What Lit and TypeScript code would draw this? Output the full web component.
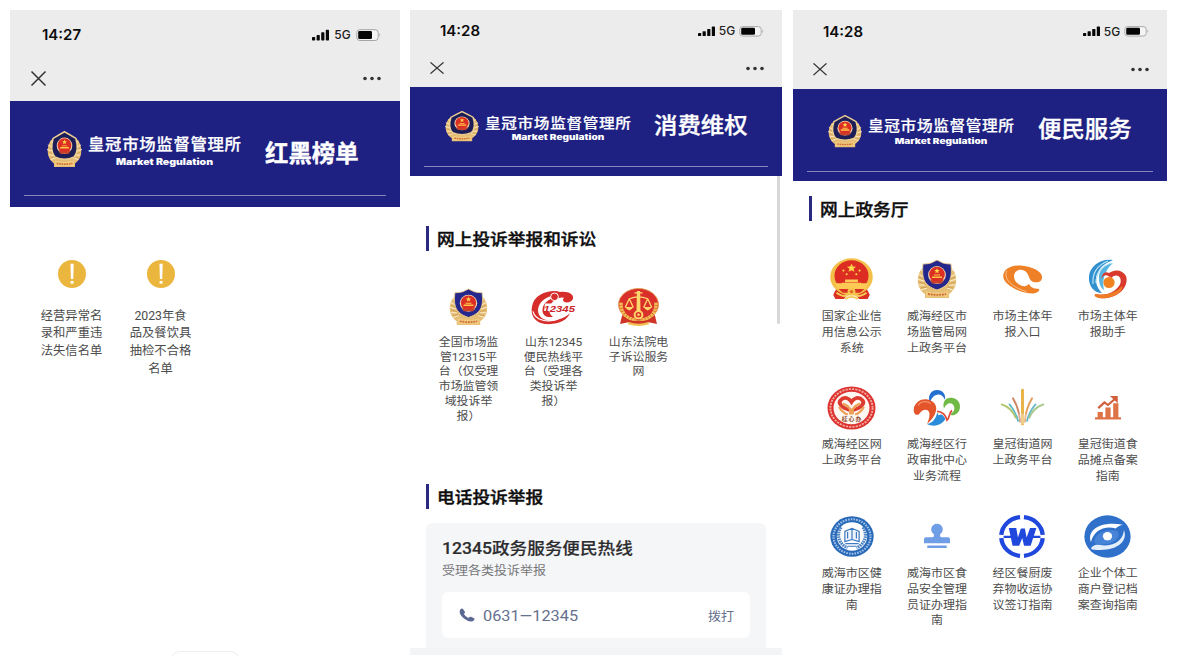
import { LitElement, html, svg, css } from "lit";
import { customElement, property } from "lit/decorators.js";
import { classMap } from "lit/directives/class-map.js";

const wreath = svg`
  <path d="M8 7C3 10 0 17 1 24C2 30 5 33 8 35L8 39H32L32 35C35 33 38 30 39 24C40 17 37 10 32 7L29 27H11Z" fill="#e6bd74"/>
  <g stroke="#fff4d8" stroke-width="1" fill="none" opacity=".9">
    <path d="M1 15L7 18M0 20L7 22M2 26L8 26M4 31L10 29M39 15L33 18M40 20L33 22M38 26L32 26M36 31L30 29M4 11L8 14M36 11L32 14"/>
  </g>
  <g stroke="#c08c45" stroke-width=".6" fill="none">
    <path d="M2 18L8 21M2 23L8 25M4 29L10 28M38 18L32 21M38 23L32 25M36 29L30 28"/>
  </g>
  <path d="M9 32Q20 35 31 32V38.5Q20 36.5 9 38.5Z" fill="#efca80"/>
  <path d="M11 35Q20 36.8 29 35" stroke="#cf6e32" stroke-width="1.8" stroke-dasharray="2 .8" fill="none"/>`;

const emblemDisc = svg`
  <circle cx="20" cy="16" r="8.9" fill="#f3d9b0"/>
  <circle cx="20" cy="15.6" r="7.8" fill="#dc2f24"/>
  <path d="M20 9.2l.8 1.8 1.9.1-1.5 1.3.5 1.9-1.7-1.1-1.7 1.1.5-1.9-1.5-1.3 1.9-.1z" fill="#ffd84f"/>
  <path d="M15 17.4H25V19H15ZM17 15.6H23V16.6H17Z" fill="#ffc547"/>
  <path d="M13 20.3Q20 24.4 27 20.3L25 24.6H15Z" fill="#c9402a"/>`;

const icons: Record<string, unknown> = {
  warn: svg`<circle cx="20" cy="20" r="20" fill="#ebb63e"/><path d="M17.8 5.5H22.4L21.8 27H18.4Z" fill="#fff"/><path d="M18 30H22.2V33.8H18Z" fill="#fff"/>`,
  badge: svg`
    ${wreath}
    <path d="M20 1L26 4Q30 5 34 5C35 17 35 26 20 31C5 26 5 17 6 5Q10 5 14 4Z" fill="#24288c" stroke="#efcf8e" stroke-width=".9"/>
    ${emblemDisc}`,
  crest: svg`
    ${wreath}
    <path d="M20 .8Q27 4.5 33 8Q37 21 31 28Q20 33 9 28Q3 21 7 8Q13 4.5 20 .8Z" fill="#1d1e58" stroke="#eccf94" stroke-width="1.7"/>
    ${emblemDisc}`,
  hotline: svg`
    <path d="M33 12C36 14 41 12 42 9C43 4 37 1 29 2C21 -1 3 3 1 17C-1 27 5 34 14 35C28 36 36 31 39 24C29 33 14 34 9 27C4 20 9 9 21 6L24 7C17 10 12 14 11.5 20C11 26 16 29 22 27.5C16 24 18 14 24 10Q29 7 33 8Q31 10 33 12Z" fill="#d62d2b"/>
    <path d="M2 22C4 31 16 34 27 30" fill="none" stroke="#fff" stroke-width="1.2"/>
    <circle cx="23.5" cy="7" r="3.9" fill="#d62d2b" stroke="#fff" stroke-width="1"/>
    <path d="M14 14H45L44 22.5H13Z" fill="#fff"/>
    <text x="12.5" y="22.2" font-size="9.6" font-style="italic" font-weight="700" textLength="31.5" lengthAdjust="spacingAndGlyphs" fill="#c9262b">12345</text>`,
  court: svg`
    <path d="M4 28L2 37L10 35L15 38H25L30 35L38 37L36 28Z" fill="#cf3426"/>
    <ellipse cx="20" cy="17" rx="19.5" ry="16.5" fill="#d9302a" stroke="#e29a4c" stroke-width=".8"/>
    <path d="M3 15C2 26 10 33 18 32M37 15C38 26 30 33 22 32" fill="none" stroke="#f1bd52" stroke-width="3.4" stroke-dasharray="2.6 .5"/>
    <path d="M16 5H24M11 11Q20 7 29 11M11 11L7 20M11 11L15 20M29 11L25 20M29 11L33 20" stroke="#ffd76c" stroke-width="1.3" fill="none"/>
    <path d="M18.4 3H21.6L22 28H18ZM7 19.6H15Q13 23 11 23T7 19.6ZM25 19.6H33Q31 23 29 23T25 19.6Z" fill="#ffd76c"/>
    <circle cx="20" cy="27.5" r="3.8" fill="#d9302a" stroke="#ffd76c" stroke-width="2"/>
    <circle cx="20" cy="27.5" r="1.3" fill="#ffd76c"/>
    <path d="M10 36Q20 39.5 30 36" fill="none" stroke="#f2c154" stroke-width="2.4"/>`,
  national: svg`
    <path d="M6 29L3 35L5 39H13L16 35H24L27 39H35L37 35L34 29Z" fill="#dc3022"/>
    <ellipse cx="20" cy="18" rx="19.8" ry="17.8" fill="#f3c04a"/>
    <ellipse cx="20" cy="17" rx="15.8" ry="14.8" fill="#dd2c22"/>
    <path d="M20 5.5l1.2 2.7 3 .2-2.3 1.9.8 2.9-2.7-1.6-2.7 1.6.8-2.9-2.3-1.9 3-.2z" fill="#ffd84d"/>
    <g fill="#ffd84d"><circle cx="12.5" cy="12" r="1"/><circle cx="27.5" cy="12" r="1"/><circle cx="15.5" cy="15.5" r="1"/><circle cx="24.5" cy="15.5" r="1"/></g>
    <path d="M14 20.5H26V23H14ZM11 23.5H29V26H11ZM5 24H35L33 29.5H7Z" fill="#fbcb55"/>
    <path d="M8 29.5H32L28 33H24Q20 29.5 16 33H12Z" fill="#dc3022"/>
    <circle cx="20" cy="32" r="3.6" fill="#f5c54d"/><circle cx="20" cy="32" r="1.6" fill="#e36a2a"/>
    <path d="M6 33Q13 38 17 35M34 33Q27 38 23 35M14 39Q20 35 26 39" fill="none" stroke="#f6ca58" stroke-width="1.8"/>`,
  swirl: svg`
    <path d="M40 13C41 6 27 .5 16 .5C4 .5 -2 8 1 15C5 23 20 29.500 31 29.500C36 29 39 25 36 24.500C31 25 28 23 26.500 19.500C25 22.500 21 22.500 18 21C13 18.500 10.500 14 11.500 10C13 5 18 4 22 6C27 8.500 26 15 30 17C34 19 40 18 40 13Z" fill="#ee8027"/>
    <path d="M4 6C0 14 9 23 24 27.500" fill="none" stroke="#fbc48d" stroke-width="1"/>`,
  phoenix: svg`
    <path d="M25 1C13 -1 2 7 1 17C0 28 7 34 14 34C8 28 6 20 10 13C13 7 18 4 25 1Z" fill="#3190cd"/>
    <path d="M20 2C10 6 4 13 5 25M23 4C13 8 8 14 8 24" fill="none" stroke="#b9e4f5" stroke-width="1.2"/>
    <path d="M25 4C16 6 10 12 11 20C11 25 13 29 16 31C14 22 16 12 25 4Z" fill="#58b5df"/>
    <path d="M21 14C27 9.5 35 11 38 17C41 26 33 37 19 39C13 40 6 38 7 35C20 38 30 31 32.5 24C34 17 28 14 23.5 19L21 17.5C18 15 15 16 13 20Q15 11 21 14Z" fill="#d93a2d"/>
    <path d="M7 35C20 37 29 33 34 27C36 32 26 39 17 39C11 40 5 38 7 35Z" fill="#ee7c24"/>
    <circle cx="21" cy="23.5" r="5.6" fill="#f08320"/>`,
  heart: svg`
    <circle cx="20" cy="20" r="19.6" fill="#dc3230"/>
    <circle cx="20" cy="20" r="17.2" fill="none" stroke="#f3a99c" stroke-width="1.6" stroke-dasharray="1.8 .9"/>
    <circle cx="20" cy="20" r="14.7" fill="#fff8f2"/>
    <path d="M19 22C12 20 9 16 11 13C14 9 18 11 20 14.5C22 11 26 9 29 13C31 16 28 20 21 22" fill="none" stroke="#dd3a30" stroke-width="3.2"/>
    <path d="M19 26V21Q16 17 13 16M21 26V21Q24 17 27 16M10 19Q12 24 17 26M30 19Q28 24 23 26" fill="none" stroke="#eda055" stroke-width="2"/>
    <text x="20" y="31.8" text-anchor="middle" font-size="4.8" font-weight="700" textLength="16" fill="#8c4a2e">桂心办</text>`,
  flower: svg`
    <path d="M17 16C14 8 18 2 24 2C30 2 33 7 32 12C30 8 27 6 24 7C20 8 18 11 17 16Z" fill="#2470d0"/>
    <path d="M14 37C16 32 18 26 15 23C12 21 8 23 6 27C2 29 0 25 1 20C3 13 11 9 18 13C26 17 25 27 14 37Z" fill="#e4552b"/>
    <path d="M5 18C8 13 14 13 18 16" fill="none" stroke="#f2906a" stroke-width="1.2"/>
    <path d="M31 21C29 14 33 9 39 10C47 11 49 20 45 25C42 28 38 29 36 27C41 26 43 21 40 17C37 14 33 16 31 21Z" fill="#70b944"/>
    <path d="M14 37C20 36 23 31 24 26C27 25 31 26 33 30C31 37 22 41 14 37Z" fill="#2b8cda"/>
    <path d="M25 27C29 25 32 27 34 33C38 30 36 26 38 23" fill="none" stroke="#fff" stroke-width="2"/>
    <path d="M24 24C29 24 33 28 34 33C37 30 36 25 39 23" fill="none" stroke="#df4636" stroke-width="1.7"/>`,
  fireworks: svg`
    <g fill="none" stroke-linecap="round" stroke-width="1.7">
      <path d="M20 3V36" stroke="#e9b347" stroke-width="2.6"/>
      <path d="M11.5 11Q17 21 18 34" stroke="#d08763"/><path d="M28.5 11Q23 21 22 34" stroke="#e19c5c"/>
      <path d="M8.5 17Q14 24 16 33" stroke="#5eb6c2"/><path d="M31.5 17Q26 24 24 33" stroke="#66b7c6"/>
      <path d="M1.5 17Q10 20 14 30" stroke="#b1c66c"/><path d="M38.5 17Q30 20 26 30" stroke="#a8c78a"/>
    </g>
    <path d="M18 36L16 26H24L22 36Z" fill="#fff" opacity=".35"/>`,
  chart: svg`
    <path d="M0 35.5H40V39H0ZM4 27H12V35.5H4ZM16 20H24V35.5H16ZM28 13H36V35.5H28Z" fill="#dd7347"/>
    <path d="M5 21L14.5 12L20 16L31 6" fill="none" stroke="#d2603a" stroke-width="3.4"/><path d="M23 1.5H35V13Z" fill="#d2603a"/>`,
  seal: svg`
    <circle cx="20" cy="20" r="19.7" fill="#2869b8"/>
    <circle cx="20" cy="20" r="16.8" fill="none" stroke="#9fc0ea" stroke-width="2" stroke-dasharray="1.5 1"/>
    <circle cx="20" cy="20" r="13.8" fill="#fff"/>
    <path d="M10 11C5 19 9 28 16 31M30 11C35 19 31 28 24 31" fill="none" stroke="#4c83c3" stroke-width="3" stroke-dasharray="1.6 .7"/>
    <path d="M13.5 15L20 12L26.5 15V25L20 23L13.5 25ZM20 12V23M16 15.5V22M24 15.5V22M14 27H26M16 29.5H24" fill="#eef4fc" stroke="#3f79bf" stroke-width="1.1"/>`,
  stamp: svg`
    <path d="M15 17C8 12 11 1 20 1C29 1 32 12 25 17Q24 22 27 22H37Q40 22 40 25V31H0V25Q0 22 3 22H13Q16 22 15 17ZM5 34.5H35V38.5H5Z" fill="#6f9de6"/>`,
  waste: svg`
    <path d="M18.3 2A18 18 0 0 0 2 18.5M2 21.5A18 18 0 0 0 18.3 38M21.7 2A18 18 0 0 1 38 18.5M38 21.5A18 18 0 0 1 21.7 38" fill="none" stroke="#2148dc" stroke-width="3.8"/>
    <path d="M4 19.2H11V21.4H4ZM29 19.2H36V21.4H29Z" fill="#2148dc"/>
    <path d="M8.5 12H15L16.5 21L19 12.5H22.5L24 21L27 12H32.5L27.5 28.5H21.8L20.2 21.5L17.6 28.5H11.8Z" fill="#2148dc"/>`,
  orbit: svg`
    <circle cx="20" cy="20" r="19.7" fill="#2f70cb"/>
    <path d="M6 25C2 14 14 5 33 9C30 10 28 11 27 12.5C17 9.5 8 15 6 25Z" fill="#fff"/>
    <path d="M34 14C38 25 27 35 7 32C4 31 9 27.5 12 27.5C24 30.5 33 25 34 14Z" fill="#e3eefb"/>
    <path d="M9 26C8 18 17 12.5 27 14.5C33 17 28 27 17 27.5Q12 28.5 9 26Z" fill="#4784d8"/>
    <circle cx="20" cy="19.7" r="3.9" fill="#fff"/>`,
};

interface Item { icon: string; w: number; h: number; lines: string[]; vb?: string; }

@customElement("icon-item")
class IconItem extends LitElement {
  @property({ attribute: false }) item!: Item;
  static styles = css`
    :host { display: flex; flex-direction: column; align-items: center; }
    .box { height: var(--icon-box); display: flex; align-items: center; justify-content: center; }
    svg { display: block; overflow: visible; font-family: "Liberation Sans", "Noto Sans CJK SC", sans-serif; }
    .label { margin-top: var(--label-gap); font-size: var(--label-size); line-height: var(--label-line);
      color: #4c4c4c; text-align: center; white-space: nowrap; transform: scaleY(var(--squash)); transform-origin: top; }
  `;
  render() {
    const { icon, w, h, lines, vb } = this.item;
    return html`<div class="box"><svg width=${w} height=${h} viewBox=${vb ?? "0 0 40 40"} preserveAspectRatio="none">${icons[icon]}</svg></div>
      <div class="label">${lines.map((l) => html`<div>${l}</div>`)}</div>`;
  }
}

@customElement("phone-header")
class PhoneHeader extends LitElement {
  @property() time = "";
  @property() heading = "";
  static styles = css`
    :host { display: block; }
    .chrome { height: var(--chrome-h); background: #ececec; }
    .status { height: var(--status-h); display: flex; align-items: center; justify-content: space-between;
      padding: 0 var(--edge-r) 0 var(--time-l); box-sizing: border-box; }
    .nav { height: var(--nav-h); display: flex; align-items: center; justify-content: space-between;
      padding: 0 var(--edge-r) 0 var(--x-l); box-sizing: border-box; }
    svg { display: block; overflow: visible; }
    .time { font: 600 15px/20px Inter, sans-serif; color: #0c0c0c; width: 42px; transform: scaleY(var(--squash)); white-space: nowrap; }
    .signals { display: flex; align-items: center; width: var(--state-w); height: 20px; }
    .bars { width: 17px; height: var(--state-h); }
    .net { flex: 1; text-align: center; font: 500 12px/20px Inter, sans-serif; color: #222; transform: scaleY(var(--squash)); white-space: nowrap; }
    .battery { width: 25px; height: var(--state-h); }
    .close { width: var(--x-w); height: var(--x-h); }
    .banner { height: var(--banner-h); background: #1e2082; box-sizing: border-box; display: flex; flex-direction: column; }
    .brand { flex: 1; display: flex; align-items: flex-start; padding-left: var(--crest-l); }
    .crest { width: var(--crest-w); height: var(--crest-h); margin-top: var(--crest-t); }
    .words { width: var(--words-w); height: var(--words-h); margin: var(--words-t) 0 0 6px; font-family: "Noto Sans CJK SC", sans-serif; }
    .heading { margin: var(--head-t) 0 0 var(--head-l); color: #fff; font: var(--head-weight) 23.4px/32px "Noto Sans CJK SC", sans-serif;
      white-space: nowrap; transform: scaleY(var(--squash)); -webkit-text-stroke: .35px #fff; }
    .rule { height: 1px; margin: 0 14px var(--rule-b); background: #8587bd; }
  `;
  render() {
    return html`
      <div class="chrome">
        <div class="status">
          <div class="time">${this.time}</div>
          <div class="signals">
            <svg class="bars" viewBox="0 0 17 12" preserveAspectRatio="none"><g fill="#080808"><rect x="0" y="8" width="3.2" height="3.5" rx=".7"/><rect x="4.6" y="6" width="3.2" height="5.5" rx=".7"/><rect x="9.2" y="3.3" width="3.2" height="8.2" rx=".7"/><rect x="13.8" y=".7" width="3.2" height="10.8" rx=".7"/></g></svg>
            <span class="net">5G</span>
            <svg class="battery" viewBox="0 0 25 12" preserveAspectRatio="none">
              <rect x=".8" y=".7" width="21.4" height="10.8" rx="3" fill="#f4f4f4" stroke="#a5a5a5"/>
              <rect x="2.2" y="2.1" width="13.8" height="8" rx="1.4" fill="#050505"/>
              <path d="M23.5 4.3Q25.3 6 23.5 7.8Z" fill="#a0a0a0"/>
            </svg>
          </div>
        </div>
        <div class="nav">
          <svg class="close" viewBox="0 0 15 15" preserveAspectRatio="none"><path d="M.5.5L14.5 14.5M14.5.5L.5 14.5" stroke="#333" stroke-width="1.5"/></svg>
          <svg width="18" height="5" viewBox="0 0 18 5"><g fill="#333"><circle cx="2" cy="2.5" r="1.8"/><circle cx="9" cy="2.5" r="1.8"/><circle cx="16" cy="2.5" r="1.8"/></g></svg>
        </div>
      </div>
      <div class="banner">
        <div class="brand">
          <svg class="crest" viewBox="0 0 40 40" preserveAspectRatio="none">${icons.crest}</svg>
          <svg class="words" viewBox="0 0 153 32" preserveAspectRatio="none" fill="#fff">
            <text x="0" y="13.8" font-size="16.4" font-weight="500" textLength="153" stroke="#fff" stroke-width=".25">皇冠市场监督管理所</text>
            <text x="28" y="28.6" font-family="Inter, sans-serif" font-size="8.8" font-weight="900" textLength="97" lengthAdjust="spacingAndGlyphs">Market Regulation</text>
          </svg>
          <div class="heading">${this.heading}</div>
        </div>
        <div class="rule"></div>
      </div>`;
  }
}

const lists: Item[] = [
  { icon: "warn", w: 28, h: 28, lines: ["经营异常名", "录和严重违", "法失信名单"] },
  { icon: "warn", w: 28, h: 28, lines: ["2023年食", "品及餐饮具", "抽检不合格", "名单"] },
];
const complaints: Item[] = [
  { icon: "badge", w: 39, h: 38, lines: ["全国市场监", "管12315平", "台（仅受理", "市场监管领", "域投诉举", "报）"] },
  { icon: "hotline", w: 45, h: 35, vb: "0 0 45 36", lines: ["山东12345", "便民热线平", "台（受理各", "类投诉举", "报）"] },
  { icon: "court", w: 41, h: 39, lines: ["山东法院电", "子诉讼服务", "网"] },
];
const services: Item[] = [
  { icon: "national", w: 43, h: 42, lines: ["国家企业信", "用信息公示", "系统"] },
  { icon: "badge", w: 40, h: 40, lines: ["威海经区市", "场监管局网", "上政务平台"] },
  { icon: "swirl", w: 39, h: 29, vb: "0 0 40 30", lines: ["市场主体年", "报入口"] },
  { icon: "phoenix", w: 40, h: 40, lines: ["市场主体年", "报助手"] },
  { icon: "heart", w: 49, h: 44, lines: ["威海经区网", "上政务平台"] },
  { icon: "flower", w: 49, h: 38, vb: "0 1 49 39", lines: ["威海经区行", "政审批中心", "业务流程"] },
  { icon: "fireworks", w: 45, h: 41, lines: ["皇冠街道网", "上政务平台"] },
  { icon: "chart", w: 26, h: 25, lines: ["皇冠街道食", "品摊点备案", "指南"] },
  { icon: "seal", w: 44, h: 41, lines: ["威海市区健", "康证办理指", "南"] },
  { icon: "stamp", w: 26, h: 26, lines: ["威海市区食", "品安全管理", "员证办理指", "南"] },
  { icon: "waste", w: 46, h: 43, lines: ["经区餐厨废", "弃物收运协", "议签订指南"] },
  { icon: "orbit", w: 47, h: 43, lines: ["企业个体工", "商户登记档", "案查询指南"] },
];

@customElement("app-root")
class AppRoot extends LitElement {
  static styles = css`
    :host { display: block; width: 1177px; height: 667px; overflow: hidden; background: #fff; box-sizing: border-box;
      font-family: Roboto, "Noto Sans CJK SC", sans-serif; }
    .stage { display: flex; padding: 10px 10px 11px; height: 646px; }
    .phone { position: relative; height: 646px; overflow: hidden; background: #fff; display: flex; flex-direction: column; }
    .lists { width: 390px; margin-right: 10px; --squash: 1;
      --chrome-h: 91px; --status-h: 50px; --nav-h: 37px; --edge-r: 19px; --time-l: 32px; --x-l: 21px; --x-w: 15px; --x-h: 15px;
      --state-w: 69px; --state-h: 12px; --banner-h: 106px; --crest-l: 37px; --crest-w: 35px; --crest-h: 37px; --crest-t: 30px;
      --words-w: 153px; --words-h: 32px; --words-t: 35px; --head-t: 35px; --head-l: 24px; --head-weight: 700; --rule-b: 11px;
      --icon-box: 28px; --label-gap: 19.5px; --label-size: 12.3px; --label-line: 17.8px; }
    .rights { width: 372px; margin-right: 11px; --squash: .92;
      --chrome-h: 77px; --status-h: 42px; --nav-h: 32px; --edge-r: 18px; --time-l: 30px; --x-l: 20px; --x-w: 14px; --x-h: 12px;
      --state-w: 66px; --state-h: 10.5px; --banner-h: 89px; --crest-l: 35px; --crest-w: 34px; --crest-h: 31px; --crest-t: 24px;
      --words-w: 146px; --words-h: 27px; --words-t: 29px; --head-t: 21px; --head-l: 23px; --head-weight: 500; --rule-b: 9px;
      --icon-box: 40px; --label-gap: 8px; --label-size: 11.9px; --label-line: 16.1px; }
    .services { width: 374px; --squash: .95;
      --chrome-h: 79px; --status-h: 43px; --nav-h: 33px; --edge-r: 18px; --time-l: 30px; --x-l: 20px; --x-w: 14px; --x-h: 12.5px;
      --state-w: 66px; --state-h: 10.5px; --banner-h: 92px; --crest-l: 35px; --crest-w: 34px; --crest-h: 33px; --crest-t: 26px;
      --words-w: 146px; --words-h: 28px; --words-t: 30px; --head-t: 22px; --head-l: 24px; --head-weight: 500; --rule-b: 9px;
      --icon-box: 44px; --label-gap: 7.5px; --label-size: 12px; --label-line: 16.3px; }
    .grid { display: grid; }
    .lists .grid { grid-template-columns: repeat(2, 89px); padding: 53px 0 0 17px; }
    .rights .grid { grid-template-columns: repeat(3, 85px); padding: 36px 0 0 16px; height: 197px; box-sizing: border-box; }
    .services .grid { grid-template-columns: repeat(4, 85.4px); grid-auto-rows: 128.5px; padding: 36px 0 0 16px; }
    .title { display: flex; align-items: center; height: 25px; padding-left: 16px; font-weight: 500; font-size: 17.7px; color: #0d0d0d; }
    .title::before { content: ""; width: 3px; height: 25px; background: #28297f; margin-right: 8px; }
    .title span { margin-bottom: 2px; transform: scaleY(var(--squash)); font-family: "Noto Sans CJK SC", sans-serif; white-space: nowrap; -webkit-text-stroke: .4px #0d0d0d; }
    .rights .title.first { margin-top: 50px; }
    .rights .title.second { margin-top: 36px; }
    .services .title { margin-top: 15px; }
    .card { margin: 14px 16px 0; height: 125px; background: #f5f6f8; border-radius: 6px 6px 0 0; padding: 14px 16px 0; box-sizing: border-box; }
    .name { font-size: 17.6px; line-height: 22px; font-weight: 500; color: #2d2d2f; transform: scaleY(.92); white-space: nowrap; -webkit-text-stroke: .2px #2d2d2f; }
    .desc { font-size: 13px; line-height: 18px; margin-top: 3px; color: #77777a; transform: scaleY(.92); }
    .call { margin-top: 12px; height: 46px; background: #fff; border-radius: 6px; display: flex; align-items: center; padding: 0 16px; color: #65708d; }
    .call svg { margin: 0 8px 0 1px; }
    .number { flex: 1; font-size: 16.3px; white-space: nowrap; transform: scaleY(.92); }
    .dial { font-size: 13px; transform: scaleY(.92); }
    .foot { height: 7px; background: #f3f4f6; }
    .scroll { position: absolute; right: 2px; top: 166px; width: 3px; height: 148px; background: #d8d8d8; border-radius: 0 0 2px 2px; }
    .pill { position: absolute; left: 160px; top: 641px; width: 70px; height: 20px; border: 1px solid #ededed; border-radius: 12px; box-sizing: border-box; }
  `;
  private items(list: Item[]) {
    return html`<div class="grid">${list.map((i) => html`<icon-item .item=${i}></icon-item>`)}</div>`;
  }
  private title(text: string, cls = "") {
    return html`<div class=${classMap({ title: true, first: cls === "first", second: cls === "second" })}><span>${text}</span></div>`;
  }
  render() {
    return html`<main class="stage">
      <section class="phone lists">
        <phone-header time="14:27" heading="红黑榜单"></phone-header>
        ${this.items(lists)}
        <div class="pill"></div>
      </section>
      <section class="phone rights">
        <phone-header time="14:28" heading="消费维权"></phone-header>
        ${this.title("网上投诉举报和诉讼", "first")}
        ${this.items(complaints)}
        ${this.title("电话投诉举报", "second")}
        <div class="card">
          <div class="name">12345政务服务便民热线</div>
          <div class="desc">受理各类投诉举报</div>
          <div class="call">
            <svg width="16" height="14" viewBox="0 0 16 16" preserveAspectRatio="none"><path d="M1 2.2Q2.5 0 4 1L6 4.5Q6.3 5.5 4.8 6.7Q6 10 9.5 11.3Q11 9.5 12 10L15.5 12Q16 13.5 13.8 15Q10 16.5 5 12Q-.5 7 1 2.2Z" fill="#5b6992"/></svg>
            <span class="number">0631—12345</span><span class="dial">拨打</span>
          </div>
        </div>
        <div class="foot"></div>
        <div class="scroll"></div>
      </section>
      <section class="phone services">
        <phone-header time="14:28" heading="便民服务"></phone-header>
        ${this.title("网上政务厅")}
        ${this.items(services)}
      </section>
    </main>`;
  }
}
